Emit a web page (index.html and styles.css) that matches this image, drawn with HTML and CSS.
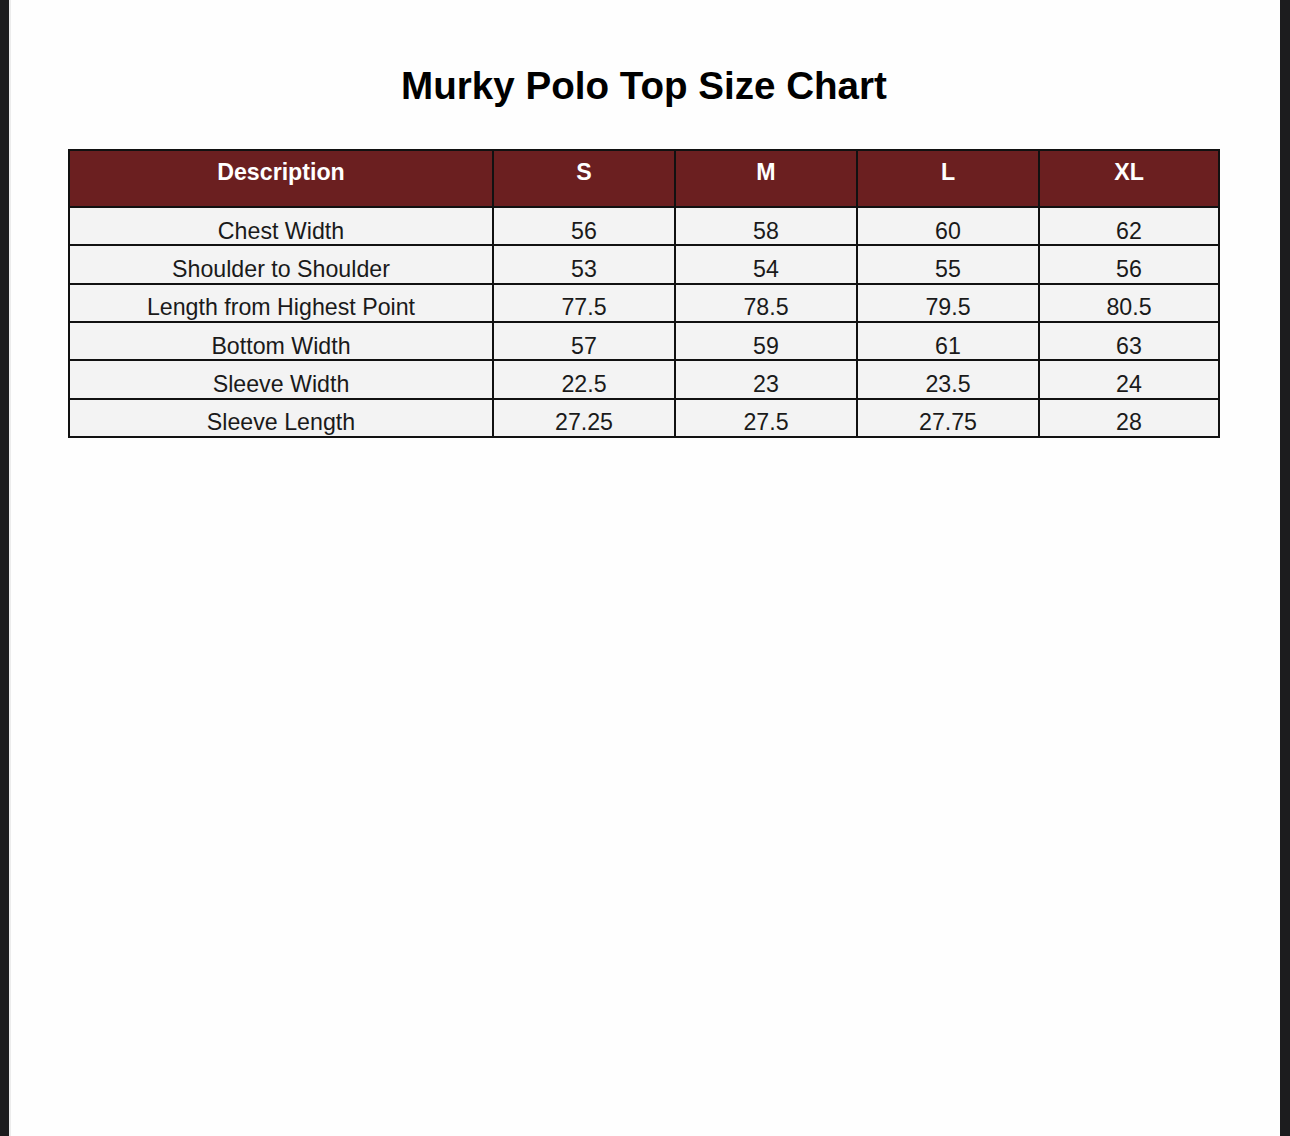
FILE: index.html
```html
<!DOCTYPE html>
<html lang="en">
<head>
<meta charset="utf-8">
<title>Murky Polo Top Size Chart</title>
<link rel="stylesheet" href="styles.css">
</head>
<body>
<div class="page">
  <h1 class="title">Murky Polo Top Size Chart</h1>
  <table class="chart">
    <colgroup>
      <col class="c-desc"><col class="c-size"><col class="c-size"><col class="c-size"><col class="c-last">
    </colgroup>
    <thead>
      <tr><th>Description</th><th>S</th><th>M</th><th>L</th><th>XL</th></tr>
    </thead>
    <tbody>
      <tr><td>Chest Width</td><td>56</td><td>58</td><td>60</td><td>62</td></tr>
      <tr><td>Shoulder to Shoulder</td><td>53</td><td>54</td><td>55</td><td>56</td></tr>
      <tr><td>Length from Highest Point</td><td>77.5</td><td>78.5</td><td>79.5</td><td>80.5</td></tr>
      <tr><td>Bottom Width</td><td>57</td><td>59</td><td>61</td><td>63</td></tr>
      <tr><td>Sleeve Width</td><td>22.5</td><td>23</td><td>23.5</td><td>24</td></tr>
      <tr><td>Sleeve Length</td><td>27.25</td><td>27.5</td><td>27.75</td><td>28</td></tr>
    </tbody>
  </table>
</div>
</body>
</html>
```

FILE: styles.css
```css
html, body {
  margin: 0;
  padding: 0;
}
body {
  background: #1c1c1e;
  height: 1136px;
  overflow: hidden;
  display: flex;
  font-family: "Liberation Sans", Arial, sans-serif;
}
.page {
  margin-left: 9px;
  width: 1269px;
  height: 1136px;
  border-left: 2px solid #ececec;
  background: #fefefe;
  display: flex;
  flex-direction: column;
}
.title {
  margin: 64px 0 0;
  font-size: 38.6px;
  line-height: 44px;
  font-weight: 700;
  text-align: center;
  color: #000;
  padding-right: 3px;
}
.chart {
  margin: 41px 0 0 57px;
  width: 1152px;
  table-layout: fixed;
  border-collapse: separate;
  border-spacing: 0;
  border-top: 2px solid #111;
  border-left: 2px solid #111;
}
.c-desc { width: 424px; }
.c-size { width: 182px; }
.c-last { width: 180px; }
.chart th,
.chart td {
  box-sizing: border-box;
  border-right: 2px solid #111;
  border-bottom: 2px solid #111;
  text-align: center;
  font-size: 23.2px;
  line-height: 22px;
  white-space: nowrap;
}
.chart th {
  background: #6b1f20;
  color: #fff;
  font-weight: 700;
  padding: 9.5px 0 23.5px;
}
.chart td {
  background: #f3f3f3;
  color: #1a1a1a;
  font-weight: 400;
  padding: 11.7px 0 2.63px;
}
```
